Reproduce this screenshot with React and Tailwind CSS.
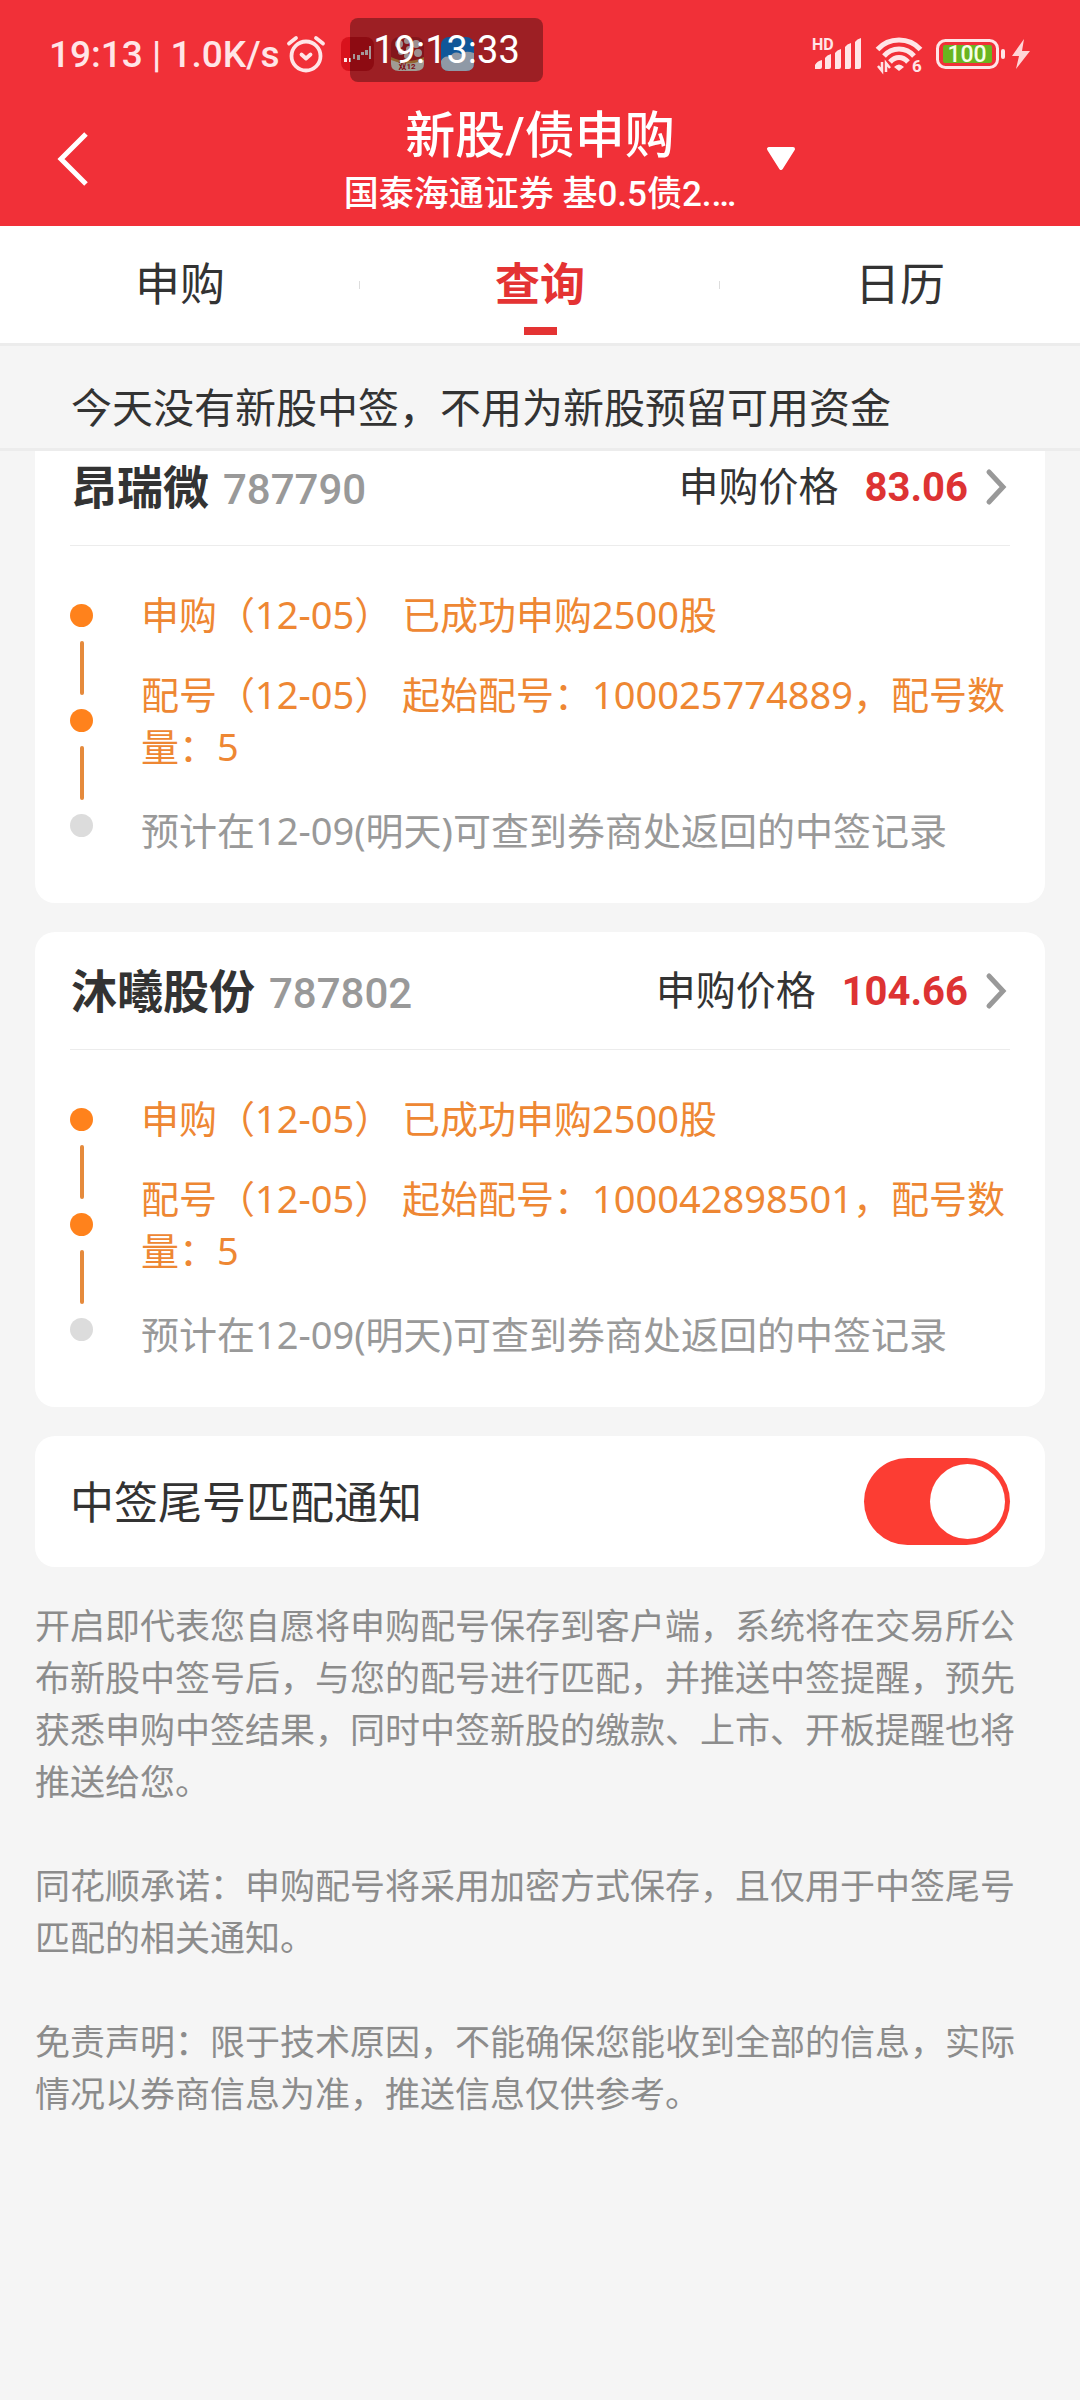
import { useState } from 'react';

const tabs = ['申购', '查询', '日历'];

const stocks = [
    { name: '昂瑞微', code: '787790', price: '83.06', start: '100025774889' },
    { name: '沐曦股份', code: '787802', price: '104.66', start: '100042898501' },
];

const notes = [
    '开启即代表您自愿将申购配号保存到客户端，系统将在交易所公布新股中签号后，与您的配号进行匹配，并推送中签提醒，预先获悉申购中签结果，同时中签新股的缴款、上市、开板提醒也将推送给您。',
    '同花顺承诺：申购配号将采用加密方式保存，且仅用于中签尾号匹配的相关通知。',
    '免责声明：限于技术原因，不能确保您能收到全部的信息，实际情况以券商信息为准，推送信息仅供参考。',
];

const AlarmIcon = () => (
    <svg width="40" height="38" viewBox="0 0 40 38" fill="none" stroke="#ffe5e7" strokeWidth="3.8" strokeLinecap="round">
        <circle cx="20" cy="21" r="14.5" />
        <path d="M15.500 19.500l4.500 4 4.500-4" strokeLinejoin="round" />
        <path d="M3 8.500L10 3" />
        <path d="M37 8.500L30 3" />
    </svg>
);

const AppIcons = () => (
    <svg width="134" height="34" viewBox="0 0 134 34">
        <rect width="33" height="34" rx="8" fill="#d9121c" />
        <path d="M3 21h3v4H3zM8 21h2v4H8zM12 17h2v5h-2zM16 18h3v5h-3zM20 15h3v3h-3zM24 13h3v5h-3zM28 9h2v13h-2z" fill="#fff" opacity=".9" />
        <rect x="50" width="33" height="34" rx="8" fill="#c9232b" />
        <path d="M50 22q16 8 33 0v5q0 7-8 7H58q-8 0-8-7z" fill="#f6eee4" />
        <path d="M50 20q16 8 33 0v3q-17 7-33 0z" fill="#e09a4a" />
        <g fill="#f1dcdc">
            <circle cx="58" cy="7" r="4" />
            <circle cx="66" cy="4" r="3" />
            <circle cx="75" cy="7" r="4" />
            <circle cx="60" cy="15" r="3" />
            <circle cx="68" cy="12" r="3" />
            <circle cx="77" cy="16" r="4" />
            <circle cx="66" cy="19" r="3" />
        </g>
        <text x="66" y="32" fontSize="8" fontWeight="700" textAnchor="middle" fill="#c4121c">双12</text>
        <rect x="100" width="33" height="34" rx="8" fill="#1a86ec" />
        <path d="M100 24q3-6 9-4 4-7 11-3 4-4 13-1v10q0 8-8 8h-17q-8 0-8-8z" fill="#dcecff" />
    </svg>
);

const SignalIcon = () => (
    <svg className="overflow-visible" width="52" height="36" viewBox="0 0 52 36" fill="#ffe5e7">
        <text x="0" y="14" fontSize="16" fontWeight="700">HD</text>
        <path d="M3 33v-4q2-4 7-5v7q0 2-2 2zM13 33V22q2-3 6-4v13q0 2-2 2zM23 33V17q2-3 6-4v18q0 2-2 2zM33 33V11q2-3 6-4v24q0 2-2 2zM43 33V6q2-3 6-4v29q0 2-2 2z" />
    </svg>
);

const WifiIcon = () => (
    <svg className="overflow-visible" width="48" height="38" viewBox="0 0 48 38" fill="none" stroke="#ffe5e7" strokeWidth="5">
        <path d="M1.500 14.500Q10 5 23 5T44.500 14.500" />
        <path d="M8 21Q14 14 23 14T38 21" />
        <path d="M14 27Q18 22.500 23 22.500T32 27" />
        <path d="M18 32Q23 27 28 32L23 36z" fill="#ffe5e7" stroke="none" />
        <path d="M6 27v9l-4-5M10 37v-9l4 5" strokeWidth="2.500" />
        <text x="36" y="37" fontSize="17" fontWeight="700" fill="#ffe5e7" stroke="none">6</text>
    </svg>
);

const BatteryIcon = () => (
    <svg className="overflow-visible" width="96" height="32" viewBox="0 0 96 32">
        <rect x="1.500" y="2.500" width="60" height="27" rx="8" fill="none" stroke="#ffe5e7" strokeWidth="3" />
        <rect x="7" y="7" width="49" height="18" rx="2" fill="#6ab41f" />
        <text x="31" y="24" fontSize="23" fontWeight="500" textAnchor="middle" fill="#f6ffe8">100</text>
        <rect x="65" y="11" width="4" height="10" rx="2" fill="#ffe5e7" />
        <path d="M88 1L76 18h7l-3 13 14-18h-8z" fill="#ffd5d8" />
    </svg>
);

const StatusBar = () => (
    <div className="relative flex h-[108px] items-center pr-[48px] pl-[49px] font-[Roboto,'Noto_Sans_CJK_SC',sans-serif] text-[#ffe5e7]">
        <span className="w-[237px] text-[37px] leading-none font-medium whitespace-nowrap">19:13 | 1.0K/s</span>
        <AlarmIcon />
        <div className="ml-[15px]">
            <AppIcons />
        </div>
        <div className="ml-auto flex items-center gap-[12px]">
            <SignalIcon />
            <WifiIcon />
            <BatteryIcon />
        </div>
        {/* floating clock */}
        <div className="absolute top-[18px] left-[350px] flex h-[64px] w-[193px] items-center justify-center rounded-lg bg-black/35 text-[38px] leading-none text-white">
            19:13:33
        </div>
    </div>
);

const StockCard = ({ stock }) => (
    <section className="rounded-[20px] bg-white px-[35px]">
        <div className="flex h-[118px] items-center border-b border-[#ececec] pl-px">
            <h2 className="flex items-baseline gap-[14px] text-[46px] font-bold text-[#333]">
                {stock.name}
                <span className="font-[Roboto] text-[42px] font-medium text-[#999]">{stock.code}</span>
            </h2>
            <button type="button" className="ml-auto flex cursor-pointer items-center">
                <span className="flex items-baseline gap-[26px] text-[40px] text-[#333]">
                    申购价格
                    <span className="font-[Roboto] font-bold text-[#dd3333]">{stock.price}</span>
                </span>
                <svg className="ml-[16px]" width="26" height="38" viewBox="0 0 26 38" fill="none" stroke="#999" strokeWidth="5" strokeLinecap="round">
                    <path d="M5 4l14 15L5 34" />
                </svg>
            </button>
        </div>
        <div className="flex gap-[48px] pt-[42px] pb-[47px]">
            <div className="flex shrink-0 flex-col items-center gap-[14px] pt-[16px]">
                <span className="size-[23px] rounded-full bg-[#ff821c]" />
                <span className="h-[54px] w-1 rounded-full bg-[#e58a3c]" />
                <span className="size-[23px] rounded-full bg-[#ff821c]" />
                <span className="h-[54px] w-1 rounded-full bg-[#e58a3c]" />
                <span className="size-[23px] rounded-full bg-[#dcdcdc]" />
            </div>
            <ul className="flex flex-1 flex-col gap-7 text-[38px] leading-[52px] text-[#ee8733]">
                <li>申购（12-05） 已成功申购2500股</li>
                <li>{`配号（12-05） 起始配号：${stock.start}，配号数量：5`}</li>
                <li className="pt-1 text-[#999]">预计在12-09(明天)可查到券商处返回的中签记录</li>
            </ul>
        </div>
    </section>
);

const App = () => {
    const [activeTab, setActiveTab] = useState('查询');
    const [notify, setNotify] = useState(true);

    return (
        <div className="min-h-screen bg-[#f5f5f5] font-['Noto_Sans','Noto_Sans_CJK_SC',sans-serif]">
            <div className="relative z-10 bg-[#f5f5f5]">
                <header className="bg-[#f13038] text-white">
                    <StatusBar />
                    <div className="grid h-[118px] grid-cols-[1fr_auto_1fr] items-center">
                        <button type="button" aria-label="返回" className="ml-[55px] cursor-pointer justify-self-start pb-[16px]">
                            <svg width="36" height="56" viewBox="0 0 36 56" fill="none" stroke="#fff" strokeWidth="5">
                                <path d="M31 3L6 28l25 25" />
                            </svg>
                        </button>
                        <div className="flex flex-col items-center font-[Roboto,'Noto_Sans_CJK_SC',sans-serif] font-medium">
                            <h1 className="text-[50px] leading-[56px]">新股/债申购</h1>
                            <p className="text-[35px] leading-[62px]">国泰海通证券 基0.5债2.…</p>
                        </div>
                        <button type="button" aria-label="切换账户" className="ml-[30px] cursor-pointer justify-self-start pb-[16px]">
                            <svg width="30" height="26" viewBox="0 0 30 26" fill="#fff" stroke="#fff" strokeWidth="4" strokeLinejoin="round">
                                <path d="M3 3h24L15 22z" />
                            </svg>
                        </button>
                    </div>
                </header>

                <nav className="grid h-[120px] grid-cols-3 items-center border-b-3 border-[#ececec] bg-white">
                    {tabs.map((tab) => (
                        <button
                            key={tab}
                            type="button"
                            onClick={() => setActiveTab(tab)}
                            className="group relative flex h-full cursor-pointer items-center justify-center"
                        >
                            <span className={`pb-[3px] text-[45px] leading-none ${tab === activeTab ? 'font-bold text-[#e43333]' : 'text-[#333]'}`}>{tab}</span>
                            {tab === activeTab && <span className="absolute bottom-2 h-2 w-[33px] bg-[#e43333]" />}
                            <span className="absolute right-0 h-2 w-px bg-[#ddd] group-last:hidden" />
                        </button>
                    ))}
                </nav>

                <p className="flex h-[105px] items-end border-b-3 border-[#ececec] px-[71px] pb-[11px] text-[41px] leading-[60px] text-[#333]">
                    今天没有新股中签，不用为新股预留可用资金
                </p>
            </div>

            {/* list is scrolled a little under the notice bar */}
            <main className="-mt-[23px] flex flex-col gap-[29px] px-[35px]">
                {stocks.map((stock) => (
                    <StockCard key={stock.code} stock={stock} />
                ))}

                <label className="flex h-[131px] cursor-pointer items-center justify-between rounded-[20px] bg-white px-[35px] text-[44px] text-[#333]">
                    中签尾号匹配通知
                    <span className="relative flex">
                        <input
                            type="checkbox"
                            role="switch"
                            checked={notify}
                            onChange={(e) => setNotify(e.target.checked)}
                            className="peer h-[87px] w-[146px] cursor-pointer appearance-none rounded-full bg-[#ddd] checked:bg-[#fc3d33]"
                        />
                        <span className="pointer-events-none absolute top-[6px] left-[6px] size-[75px] rounded-full bg-white peer-checked:left-[66px]" />
                    </span>
                </label>

                <div className="flex flex-col gap-[52px] pt-1 text-[35px] leading-[52px] text-[#8c8c8c]">
                    {notes.map((note) => (
                        <p key={note}>{note}</p>
                    ))}
                </div>
            </main>
        </div>
    );
};

export default App;
